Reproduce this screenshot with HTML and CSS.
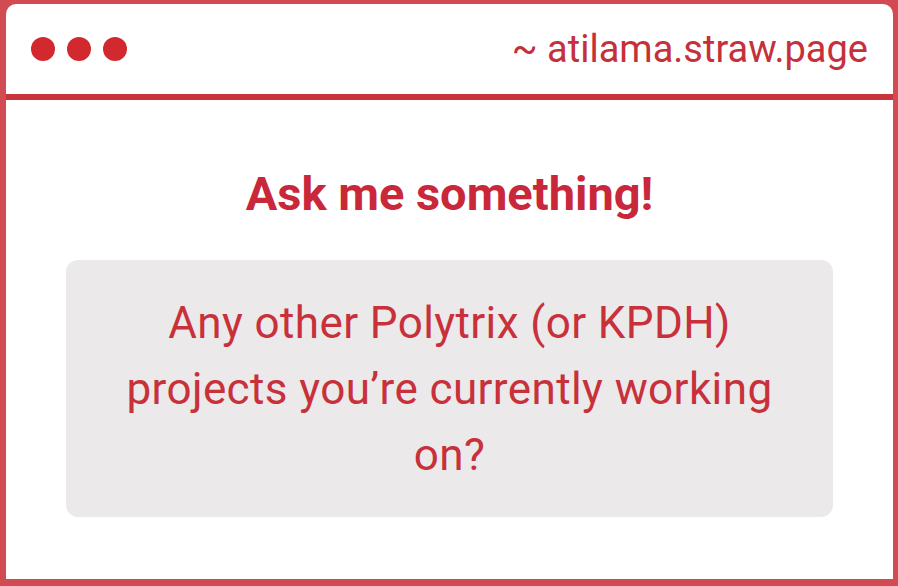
FILE: index.html
```html
<!DOCTYPE html>
<html lang="en">
<head>
<meta charset="utf-8">
<title>Ask me something</title>
<link rel="stylesheet" href="styles.css">
</head>
<body>
<div class="frame">
  <div class="window">
    <header class="bar">
      <div class="dots">
        <span class="dot"></span>
        <span class="dot"></span>
        <span class="dot"></span>
      </div>
      <div class="url">~ atilama.straw.page</div>
    </header>
    <main class="content">
      <h1 class="title">Ask me something!</h1>
      <div class="question">Any other Polytrix (or KPDH) projects you’re currently working on?</div>
    </main>
  </div>
</div>
</body>
</html>
```

FILE: styles.css
```css
html, body {
  margin: 0;
  padding: 0;
  background: #ffffff;
}
.frame {
  width: 898px;
  height: 586px;
  box-sizing: border-box;
  background: #d24a52;
  padding: 4px 5px 7px 6px;
}
.window {
  height: 100%;
  background: #ffffff;
  border-radius: 10px 10px 0 0;
  display: flex;
  flex-direction: column;
  font-family: Roboto, "Liberation Sans", sans-serif;
  color: #c8303a;
}
.bar {
  height: 90px;
  border-bottom: 6px solid #c9343b;
  display: flex;
  align-items: center;
  justify-content: space-between;
  padding: 0 25px;
}
.dots {
  display: flex;
  gap: 12px;
}
.dot {
  width: 24px;
  height: 24px;
  border-radius: 50%;
  background: #d2292f;
}
.url {
  font-size: 38px;
  color: #c5303a;
  line-height: 1;
}
.content {
  flex: 1;
  display: flex;
  flex-direction: column;
  align-items: center;
}
.title {
  margin: 67px 0 39px;
  font-size: 47px;
  line-height: 54px;
  font-weight: 700;
  color: #c8283a;
}
.question {
  width: 767px;
  box-sizing: border-box;
  padding: 30px 40px 29px;
  background: #ebe9ea;
  border-radius: 12px;
  text-align: center;
  font-size: 44px;
  letter-spacing: 0.4px;
  line-height: 66px;
  color: #c8303a;
}
```
